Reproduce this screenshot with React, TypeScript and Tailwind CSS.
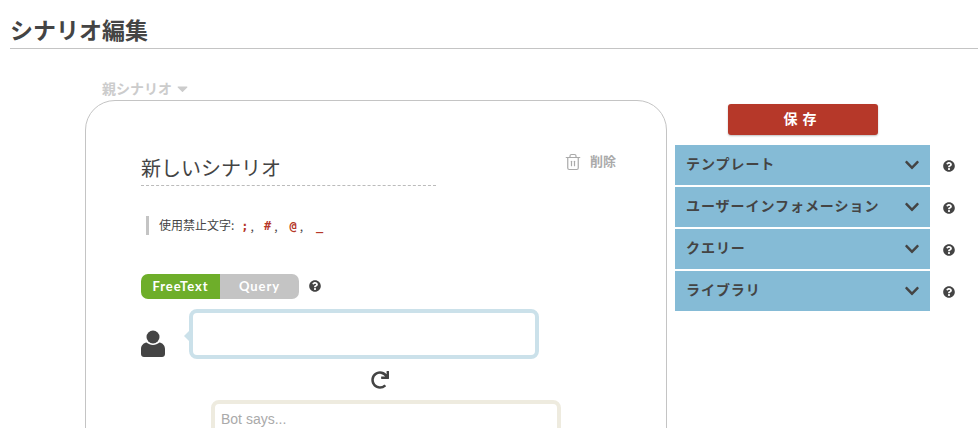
import { FaChevronDown, FaQuestionCircle, FaRedo, FaCaretDown } from "react-icons/fa";
import { Trash2 } from "lucide-react";

const jp = "font-['Noto_Sans_CJK_JP','Noto_Sans',sans-serif]";
const mono = "font-['DejaVu_Sans_Mono',monospace] font-bold text-[#b63829]";
const accordions = ["テンプレート", "ユーザーインフォメーション", "クエリー", "ライブラリ"];

function UserIcon() {
  return (
    <svg width="24" height="27" viewBox="0 0 24 27" fill="#444444" className="block">
      <circle cx="12" cy="7" r="6.5" />
      <path d="M0 19c0-3.500 2.500-6 5.500-6.500C7.500 14 9.500 15 12 15s4.500-1 6.500-2.500C21.500 13 24 15.500 24 19v5c0 1.700-1.300 3-3 3H3c-1.700 0-3-1.300-3-3z" />
    </svg>
  );
}

export default function App() {
  return (
    <div className={`h-[428px] w-[978px] overflow-hidden bg-white text-[#444444] ${jp}`}>
      <div className="ml-[10px] h-[49px] border-b border-[#c4c4c4] pt-[11px]">
        <h1 className="text-[23px] font-bold leading-[36px]">シナリオ編集</h1>
      </div>

      <div className="flex">
        <div className="ml-[85px] w-[582px] shrink-0">
          <div className="ml-[17px] mt-[29px] flex h-[22px] items-center text-[14px] font-bold text-[#cccccc]">
            <span className="mb-[2px]">親シナリオ</span>
            <FaCaretDown className="mb-[2px] ml-[2px] text-[17px]" />
          </div>

          <div className="h-[400px] rounded-t-[30px] border border-[#c4c4c4] pl-[55px] pt-[50px]">
            <div className="flex w-[476px] items-start justify-between">
              <div className="h-[35px] w-[295px] border-b border-dashed border-[#bbbbbb] text-[20px] leading-[34px]">
                新しいシナリオ
              </div>
              <div className="mb-[2px] flex items-center pr-[1px] text-[13px] font-bold text-[#aaaaaa]">
                <Trash2 size={18} strokeWidth={1.6} className="mb-[2px] mr-[8px]" />
                <span className="mb-[4px]">削除</span>
              </div>
            </div>

            <div className="ml-[5px] mt-[30px] flex h-[19px] items-center border-l-[3px] border-[#c4c4c4] pl-[10px] text-[12px]">
              <span className="mb-[1px]">使用禁止文字:</span>
              <span className={`ml-[7px] ${mono}`}>;</span>
              <span className="ml-[2px]">,</span>
              <span className={`ml-[10px] ${mono}`}>#</span>
              <span className="ml-[3px]">,</span>
              <span className={`ml-[12px] ${mono}`}>@</span>
              <span className="ml-[3px]">,</span>
              <span className={`ml-[13px] ${mono}`}>_</span>
            </div>

            <div className="mt-[39px] flex items-center">
              <div className="flex h-[25px] w-[158px] overflow-hidden rounded-[7px] font-['Lato',sans-serif] text-[13px] font-bold tracking-[0.9px] text-white">
                <div className="flex w-[79px] items-center justify-center bg-[#6eae2a]">FreeText</div>
                <div className="flex w-[79px] items-center justify-center bg-[#c4c4c4]">Query</div>
              </div>
              <FaQuestionCircle className="mb-[2px] ml-[10px] text-[12px] text-[#444444]" />
            </div>

            <div className="mt-[10px] flex items-center">
              <div className="mt-[19px] w-[24px]">
                <UserIcon />
              </div>
              <div className="relative ml-[24px] h-[50px] w-[350px] rounded-[8px] border-[4px] border-[#cbe1ea]">
                <div className="absolute left-[-9px] top-[18px] h-0 w-0 border-y-[5px] border-r-[5px] border-y-transparent border-r-[#cbe1ea]" />
              </div>
            </div>

            <div className="mt-[12px] flex w-[478px] justify-center">
              <FaRedo className="text-[18px] text-[#444444]" />
            </div>

            <div className="ml-[70px] mt-[11px] h-[60px] w-[350px] rounded-[8px] border-[4px] border-[#eeebdf] px-[6px] pt-[5px] font-['Liberation_Sans',sans-serif] text-[14px] leading-[20px] text-[#aaaaaa]">
              Bot says...
            </div>
          </div>
        </div>

        <div className="ml-[8px] mt-[55px] w-[303px]">
          <div className="flex w-[255px] justify-center">
            <button className="h-[31px] w-[150px] rounded-[3px] bg-[#b63829] pb-[3px] pr-[4px] text-[14px] font-bold tracking-[1px] text-white shadow-[0_1px_2px_rgba(0,0,0,0.25)]">
              保 存
            </button>
          </div>
          <div className="mt-[10px] flex flex-col gap-[2px]">
            {accordions.map((label) => (
              <div key={label} className="flex items-center">
                <div className="flex h-[40px] w-[255px] items-center justify-between bg-[#85bbd6] pl-[11px] pr-[10px] text-[14px] font-bold tracking-[0.95px]">
                  <span className="mb-[3px]">{label}</span>
                  <FaChevronDown className="text-[16px]" />
                </div>
                <FaQuestionCircle className="ml-[13px] mt-[2px] text-[12px]" />
              </div>
            ))}
          </div>
        </div>
      </div>
    </div>
  );
}
